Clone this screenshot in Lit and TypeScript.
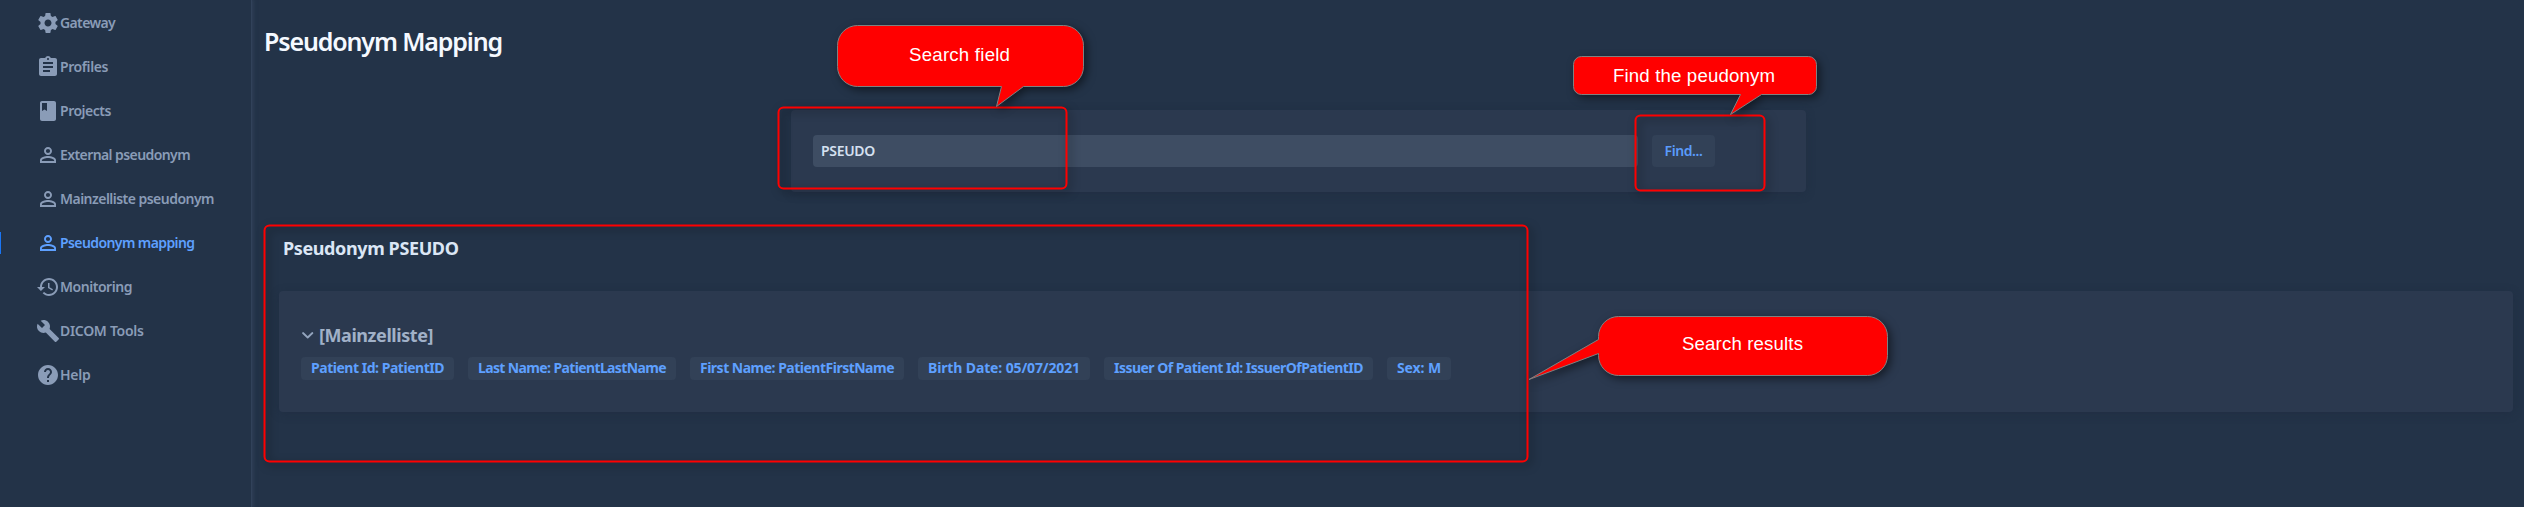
import { LitElement, html, svg, css } from "lit";
import { customElement, property } from "lit/decorators.js";
import { classMap } from "lit/directives/class-map.js";

/** Single-line label whose tracking is adjusted to occupy a given width. */
@customElement("fit-label")
class FitLabel extends LitElement {
  @property() text = "";
  @property({ type: Number }) width = 0;

  static styles = css`
    :host { display: inline-block; white-space: nowrap; }
    .label { display: inline-block; white-space: pre; }
  `;

  firstUpdated() {
    const el = this.renderRoot.querySelector(".label") as HTMLElement;
    const natural = el.getBoundingClientRect().width;
    const n = this.text.length;
    if (this.width && n) el.style.letterSpacing = `${(this.width - natural) / n}px`;
  }

  render() {
    return html`<span class="label">${this.text}</span>`;
  }
}

const person = svg`<path d="M12 5.9a2.1 2.1 0 1 1 0 4.2 2.1 2.1 0 0 1 0-4.2m0 9c2.97 0 6.1 1.46 6.1 2.1v1.1H5.9V17c0-.64 3.13-2.1 6.1-2.1M12 4C9.79 4 8 5.79 8 8s1.79 4 4 4 4-1.79 4-4-1.79-4-4-4zm0 9c-2.67 0-8 1.34-8 4v3h16v-3c0-2.66-5.33-4-8-4z"/>`;

const ICONS = {
  gear: svg`<path d="M19.43 12.98c.04-.32.07-.64.07-.98s-.03-.66-.07-.98l2.11-1.65c.19-.15.24-.42.12-.64l-2-3.46c-.12-.22-.39-.3-.61-.22l-2.49 1c-.52-.4-1.08-.73-1.69-.98l-.38-2.65C14.46 2.18 14.25 2 14 2h-4c-.25 0-.46.18-.49.42l-.38 2.65c-.61.25-1.17.59-1.69.98l-2.49-1c-.23-.09-.49 0-.61.22l-2 3.46c-.13.22-.07.49.12.64l2.11 1.65c-.04.32-.07.65-.07.98s.03.66.07.98l-2.11 1.65c-.19.15-.24.42-.12.64l2 3.46c.12.22.39.3.61.22l2.49-1c.52.4 1.08.73 1.69.98l.38 2.65c.03.24.24.42.49.42h4c.25 0 .46-.18.49-.42l.38-2.65c.61-.25 1.17-.59 1.69-.98l2.49 1c.23.09.49 0 .61-.22l2-3.46c.12-.22.07-.49-.12-.64l-2.11-1.65zM12 15.5c-1.93 0-3.5-1.57-3.5-3.5s1.57-3.5 3.5-3.5 3.5 1.57 3.5 3.5-1.57 3.5-3.5 3.5z"/>`,
  clipboard: svg`<path d="M19 3h-4.18C14.4 1.84 13.3 1 12 1c-1.3 0-2.4.84-2.82 2H5c-1.1 0-2 .9-2 2v14c0 1.1.9 2 2 2h14c1.1 0 2-.9 2-2V5c0-1.1-.9-2-2-2zm-7 0c.55 0 1 .45 1 1s-.45 1-1 1-1-.45-1-1 .45-1 1-1zm2 14H7v-2h7v2zm3-4H7v-2h10v2zm0-4H7V7h10v2z"/>`,
  book: svg`<path d="M18 2H6c-1.1 0-2 .9-2 2v16c0 1.1.9 2 2 2h12c1.1 0 2-.9 2-2V4c0-1.1-.9-2-2-2zM6 4h5v8l-2.5-1.5L6 12V4z"/>`,
  person,
  history: svg`<path d="M13 3c-4.97 0-9 4.03-9 9H1l3.89 3.89.07.14L9 12H6c0-3.87 3.13-7 7-7s7 3.13 7 7-3.13 7-7 7c-1.93 0-3.68-.79-4.94-2.06l-1.42 1.42C8.27 19.99 10.51 21 13 21c4.97 0 9-4.03 9-9s-4.03-9-9-9zm-1 5v5l4.28 2.54.72-1.21-3.5-2.08V8H12z"/>`,
  wrench: svg`<path d="M22.7 19l-9.1-9.1c.9-2.3.4-5-1.5-6.9-2-2-5-2.4-7.4-1.3L9 6 6 9 1.6 4.7C.4 7.1.9 10.1 2.9 12.1c1.9 1.9 4.6 2.4 6.9 1.5l9.1 9.1c.4.4 1 .4 1.4 0l2.3-2.3c.5-.4.5-1.1.1-1.4z"/>`,
  help: svg`<path d="M12 2C6.48 2 2 6.48 2 12s4.48 10 10 10 10-4.48 10-10S17.52 2 12 2zm1 17h-2v-2h2v2zm2.07-7.75l-.9.92C13.45 12.9 13 13.5 13 15h-2v-.5c0-1.1.45-2.1 1.17-2.83l1.24-1.26c.37-.36.59-.86.59-1.41 0-1.1-.9-2-2-2s-2 .9-2 2H8c0-2.21 1.79-4 4-4s4 1.79 4 4c0 .88-.36 1.68-.93 2.25z"/>`,
};

const NAV: { icon: keyof typeof ICONS; text: string; width: number; active?: boolean }[] = [
  { icon: "gear", text: "Gateway", width: 55 },
  { icon: "clipboard", text: "Profiles", width: 48 },
  { icon: "book", text: "Projects", width: 51 },
  { icon: "person", text: "External pseudonym", width: 130 },
  { icon: "person", text: "Mainzelliste pseudonym", width: 154 },
  { icon: "person", text: "Pseudonym mapping", width: 134.5, active: true },
  { icon: "history", text: "Monitoring", width: 72 },
  { icon: "wrench", text: "DICOM Tools", width: 83.5 },
  { icon: "help", text: "Help", width: 30.5 },
];

const BADGES = [
  { text: "Patient Id: PatientID", width: 153 },
  { text: "Last Name: PatientLastName", width: 208 },
  { text: "First Name: PatientFirstName", width: 214 },
  { text: "Birth Date: 05/07/2021", width: 172 },
  { text: "Issuer Of Patient Id: IssuerOfPatientID", width: 269 },
  { text: "Sex: M", width: 64 },
];

@customElement("app-root")
class AppRoot extends LitElement {
  static styles = css`
    :host {
      display: block;
      position: relative;
      width: 2524px;
      height: 507px;
      overflow: hidden;
      background: #233348;
      color: #dbe6f5;
      font-family: "Noto Sans", "Open Sans", sans-serif;
      font-size: 14px;
    }
    * { box-sizing: border-box; }
    .layout { display: flex; height: 100%; }
    .drawer {
      width: 252px;
      flex: none;
      padding-top: 1px;
      border-right: 1px solid #31425a;
      box-shadow: 0 0 4px 1px rgba(52, 70, 95, 0.8);
    }
    .item {
      display: flex;
      align-items: center;
      height: 44px;
      padding-left: 36px;
      color: #8a9cb7;
      font-weight: 600;
      position: relative;
    }
    .item fit-label { padding-bottom: 1px; }
    .item svg { width: 24px; height: 24px; fill: currentColor; flex: none; }
    .item.active { color: #5ea0ff; }
    .item.active::before {
      content: "";
      position: absolute;
      left: 0;
      top: 11px;
      width: 1px;
      height: 22px;
      background: #1a76f5;
    }
    .main { flex: 1; display: flex; flex-direction: column; padding: 0 11px 0 14px; }
    .title {
      margin: 0 0 0 -2px;
      height: 110px;
      padding-top: 24px;
      font-size: 25px;
      line-height: 34px;
      font-weight: 600;
      color: #f5f9ff;
    }
    .card {
      background: #2b394f;
      border-radius: 4px;
      box-shadow: 0 2px 10px rgba(26, 38, 56, 0.3);
    }
    .search {
      display: flex;
      align-items: center;
      gap: 14px;
      width: 1015px;
      height: 82px;
      margin-left: 525px;
      padding: 0 22px;
    }
    .field {
      display: flex;
      align-items: center;
      width: 825px;
      height: 32px;
      padding: 0 0 1px 8px;
      border-radius: 4px;
      background: #3e4d63;
      color: #d5e0f0;
      font-weight: 600;
    }
    .find {
      display: flex;
      align-items: center;
      justify-content: center;
      width: 63px;
      height: 32px;
      padding-bottom: 1px;
      border-radius: 4px;
      background: #324157;
      color: #5a9bfb;
      font-weight: 600;
    }
    .subtitle {
      margin: 44px 0 0 17px;
      height: 55px;
      font-size: 18px;
      line-height: 25px;
      font-weight: 700;
      color: #dbe6f5;
    }
    .results { margin-left: 13px; height: 121px; padding: 31px 22px 0; }
    .summary {
      display: flex;
      align-items: center;
      gap: 4px;
      height: 26px;
      font-size: 18px;
      line-height: 26px;
      font-weight: 700;
      color: #a1b1c8;
    }
    .chevron { width: 14px; height: 14px; fill: none; stroke: #93a4bd; stroke-width: 1.8; stroke-linecap: round; stroke-linejoin: round; }
    .badges { display: flex; gap: 14px; margin-top: 9px; }
    .badge {
      display: flex;
      align-items: center;
      height: 23px;
      padding: 0 10px 1px;
      border-radius: 4px;
      background: #324157;
      color: #5ea0ff;
      font-weight: 700;
      line-height: 20px;
    }
    .notes { position: absolute; left: 0; top: 0; width: 2524px; height: 507px; }
    .frame { fill: none; stroke: #f00; stroke-width: 2; }
    .bubble { fill: #f00; stroke: #808080; stroke-width: 1; }
    .note { fill: #fff; font: 18.67px "Liberation Sans", Arial, sans-serif; }
    .shadowed { filter: drop-shadow(3px 3px 4px rgba(0, 0, 0, 0.5)); }
  `;

  render() {
    return html`
      <div class="layout">
        <nav class="drawer">
          ${NAV.map(
            (n) => html`<div class=${classMap({ item: true, active: !!n.active })}>
              <svg viewBox="0 0 24 24">${ICONS[n.icon]}</svg>
              <fit-label text=${n.text} width=${n.width}></fit-label>
            </div>`
          )}
        </nav>
        <main class="main">
          <h2 class="title"><fit-label text="Pseudonym Mapping" width="238"></fit-label></h2>
          <div class="card search">
            <div class="field"><fit-label text="PSEUDO" width="54"></fit-label></div>
            <div class="find"><fit-label text="Find..." width="38"></fit-label></div>
          </div>
          <div class="subtitle"><fit-label text="Pseudonym PSEUDO" width="175.5"></fit-label></div>
          <div class="card results">
            <div class="summary">
              <svg class="chevron" viewBox="0 0 14 14"><path d="M2 5l4.7 4.5L11.4 5" /></svg>
              <fit-label text="[Mainzelliste]" width="114"></fit-label>
            </div>
            <div class="badges">
              ${BADGES.map(
                (b) => html`<div class="badge"><fit-label text=${b.text} width=${b.width - 20}></fit-label></div>`
              )}
            </div>
          </div>
        </main>
      </div>
      <svg class="notes" viewBox="0 0 2524 507">
        <g class="shadowed">
          <rect class="frame" x="778.5" y="107.5" width="288" height="81" rx="5" />
          <rect class="frame" x="1635.5" y="115.5" width="129" height="75" rx="5" />
          <rect class="frame" x="264.5" y="225.5" width="1263" height="236" rx="5" />
        </g>
        <g class="shadowed">
          <path class="bubble" d="M857.5 25.5H1063.5a20 20 0 0 1 20 20V66.5a20 20 0 0 1-20 20H1023.5L996.5 106.5L1001.5 86.5H857.5a20 20 0 0 1-20-20V45.5a20 20 0 0 1 20-20z" />
          <path class="bubble" d="M1581.5 56.5H1808.5a8 8 0 0 1 8 8V86.5a8 8 0 0 1-8 8H1761.5L1730.5 114.5L1740.5 94.5H1581.5a8 8 0 0 1-8-8V64.5a8 8 0 0 1 8-8z" />
          <path class="bubble" d="M1618.5 316.5H1867.5a20 20 0 0 1 20 20V355.5a20 20 0 0 1-20 20H1618.5a20 20 0 0 1-20-20V353.5L1529 379.5L1598.5 339.5V336.5a20 20 0 0 1 20-20z" />
        </g>
        <text class="note" x="909" y="61" textLength="101">Search field</text>
        <text class="note" x="1613" y="82" textLength="162">Find the peudonym</text>
        <text class="note" x="1682" y="350" textLength="121">Search results</text>
      </svg>
    `;
  }
}
